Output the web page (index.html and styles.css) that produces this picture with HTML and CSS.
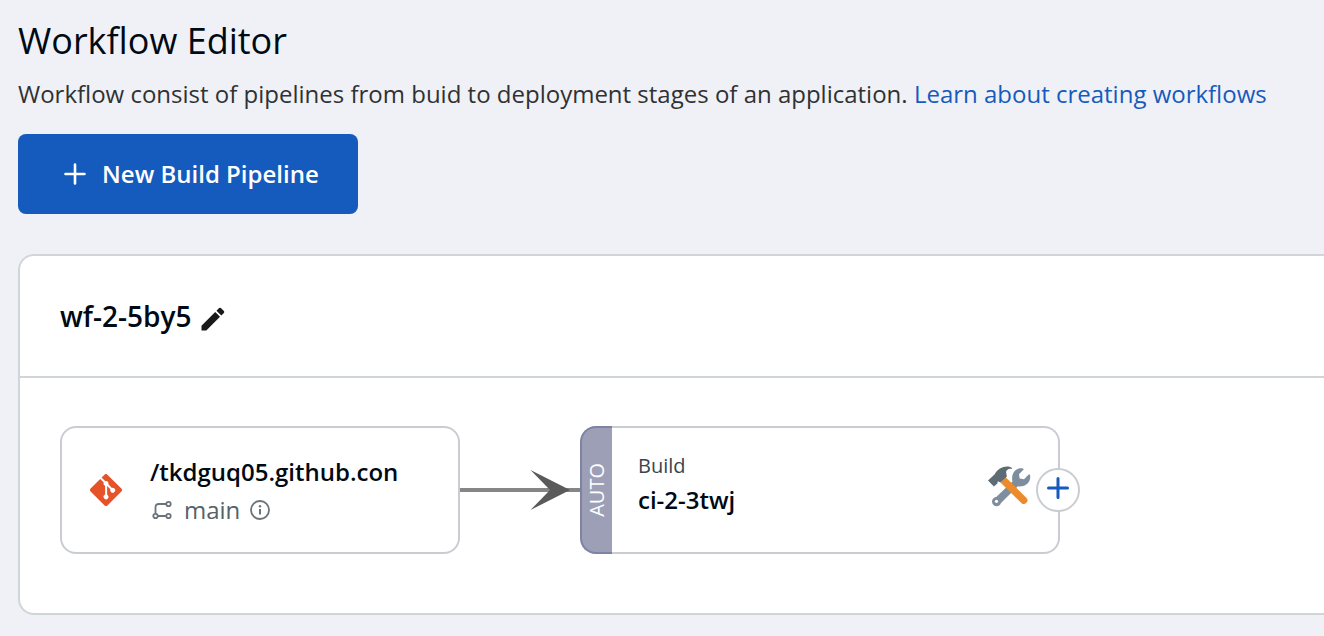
FILE: index.html
```html
<!DOCTYPE html>
<html lang="en">
<head>
<meta charset="utf-8">
<meta name="viewport" content="width=device-width, initial-scale=1">
<title>Workflow Editor</title>
<link rel="stylesheet" href="styles.css">
</head>
<body>
<main class="page">
  <header class="intro">
    <h1 class="title">Workflow Editor</h1>
    <p class="description">Workflow consist of pipelines from buid to deployment stages of an application. <a class="link" href="#docs">Learn about creating workflows</a></p>
    <button class="new-pipeline" type="button">
      <svg width="22" height="22" viewBox="0 0 22 22" aria-hidden="true"><path d="M11 1.500v19M1.500 11h19" stroke="#fff" stroke-width="2.600" stroke-linecap="round"/></svg>
      <span>New Build Pipeline</span>
    </button>
  </header>

  <section class="workflow">
    <div class="workflow-head">
      <h2 class="workflow-name">wf-2-5by5</h2>
      <button class="edit" type="button" aria-label="Edit workflow name">
        <svg width="24" height="24" viewBox="0 0 24 24" aria-hidden="true"><path fill="#1a1a1a" d="M.5 18.700v4.800h4.800L19 9.800 14.200 5zM22.900 5.900a1.300 1.300 0 0 0 0-1.800l-3-3a1.300 1.300 0 0 0-1.800 0L15.500 3.700l4.800 4.800z"/></svg>
      </button>
    </div>
    <div class="workflow-body">
      <article class="node source">
        <svg class="git" width="32" height="32" viewBox="0 0 92 92" aria-hidden="true"><path fill="#e65328" d="M90.156 41.965 50.036 1.848a5.918 5.918 0 0 0-8.372 0l-8.328 8.332 10.566 10.566a7.030 7.030 0 0 1 7.230 1.684 7.034 7.034 0 0 1 1.669 7.277l10.187 10.184a7.028 7.028 0 0 1 7.278 1.672 7.040 7.040 0 0 1 0 9.957 7.050 7.050 0 0 1-9.965 0 7.044 7.044 0 0 1-1.528-7.660l-9.500-9.497V59.360a7.040 7.040 0 0 1 1.860 11.290 7.040 7.040 0 0 1-9.957 0 7.040 7.040 0 0 1 0-9.958 7.060 7.060 0 0 1 2.304-1.539V33.926a7.049 7.049 0 0 1-3.820-9.234L29.242 14.272 1.730 41.777a5.920 5.920 0 0 0 0 8.371L41.852 90.270a5.925 5.925 0 0 0 8.370 0l39.934-39.934a5.925 5.925 0 0 0 0-8.371"/></svg>
        <div class="node-text">
          <div class="node-name">/tkdguq05.github.con</div>
          <div class="branch">
            <svg width="20" height="20" viewBox="0 0 20 20" fill="none" stroke="#6b747c" stroke-width="1.800" aria-hidden="true"><circle cx="3.500" cy="16" r="2.200"/><circle cx="16.500" cy="16" r="2.200"/><circle cx="16.500" cy="4" r="2.200"/><path d="M3.500 13.800V7.500Q3.500 4 7 4h7.300M5.700 16h8.600"/></svg>
            <span class="branch-name">main</span>
            <svg width="20" height="20" viewBox="0 0 20 20" fill="none" aria-hidden="true"><circle cx="10" cy="10" r="9" stroke="#6b747c" stroke-width="1.800"/><path d="M10 9v5.500" stroke="#6b747c" stroke-width="2"/><circle cx="10" cy="6.300" r="1.200" fill="#6b747c"/></svg>
          </div>
        </div>
      </article>

      <svg class="connector" width="120" height="40" viewBox="0 0 120 40" aria-hidden="true"><path d="M0 20h120" stroke="#868686" stroke-width="4"/><path d="M70.500 0 110 20 70.500 40 90 20z" fill="#5a5a5a"/></svg>

      <article class="node build">
        <div class="trigger"><span>AUTO</span></div>
        <div class="build-text">
          <div class="node-kind">Build</div>
          <div class="node-name">ci-2-3twj</div>
        </div>
        <svg class="tools" width="44" height="44" viewBox="0 0 44 44" aria-hidden="true">
          <path fill="#7e8e9e" d="M24.500 15.500C23 9.500 26 3.500 31.500 2.300c2-.4 4 .1 4.300.9L31 8.200l.7 4.300 4.300.8 5-5c1.500 0 1.500 3 .8 5.500-1.700 5.200-7 7.500-12 6.500L13 37C11.500 41.500 4.500 41.500 4 35.800c0-3 2.500-4.500 4.500-5z"/>
          <circle cx="8.500" cy="35.300" r="1.600" fill="#fff"/>
          <path fill="#ed8b2b" d="m12.500 16.500 5-5.500L38.500 32c3 3-1.500 8-4.900 5.200z"/>
          <path fill="#5d6b75" d="M0 14.500 6.500 8.500C9.500 3 15 0 20.500.6c2.500.4 3.800 1.300 3.600 2.300C20 2.500 17.800 4.500 18.200 6.700l.7 3.700-6.500 6.200-2.600-1.400-.4 2.300-3.500 3z"/>
        </svg>
        <button class="add" type="button" aria-label="Add pipeline">
          <svg width="22" height="22" viewBox="0 0 22 22" aria-hidden="true"><path d="M11 1.500v19M1.500 11h19" stroke="#155bbd" stroke-width="3" stroke-linecap="round"/></svg>
        </button>
      </article>
    </div>
  </section>
</main>
</body>
</html>
```
FILE: styles.css
```css
* {
  box-sizing: border-box;
}

body {
  margin: 0;
  background: #f0f1f6;
  color: #000a14;
  font-family: "Open Sans", sans-serif;
  font-size: 24px;
  line-height: 32px;
}

h1, h2, p {
  margin: 0;
}

button {
  padding: 0;
  border: 0;
  font: inherit;
  cursor: pointer;
}

svg {
  display: block;
  flex: none;
}

.page {
  padding: 17px 0 20px 18px;
}

.title {
  font-size: 36px;
  font-weight: 400;
  line-height: 48px;
}

.description {
  margin-top: 13px;
  color: #2f3235;
}

.link {
  color: #155bbd;
  text-decoration: none;
}

.new-pipeline {
  display: flex;
  align-items: center;
  gap: 16px;
  height: 80px;
  margin-top: 24px;
  padding: 0 39px 0 46px;
  border-radius: 8px;
  background: #155bbd;
  color: #fff;
  font-weight: 600;
}

.workflow {
  margin-top: 40px;
  border: 2px solid #d0d5d9;
  border-right: 0;
  border-radius: 16px 0 0 16px;
  background: #fff;
}

.workflow-head {
  display: flex;
  align-items: center;
  gap: 10px;
  padding: 40px;
  border-bottom: 2px solid #d0d5d9;
}

.workflow-name {
  font-size: 28px;
  font-weight: 600;
  line-height: 40px;
}

.edit {
  padding-top: 6px;
  background: none;
}

.workflow-body {
  display: flex;
  align-items: center;
  padding: 48px 40px 59px;
}

.node {
  display: flex;
  align-items: center;
  flex: none;
  height: 128px;
  border: 2px solid #c9cdd2;
  border-radius: 16px;
  background: #fff;
}

.source {
  gap: 28px;
  width: 400px;
  padding-left: 28px;
}

.node-text {
  padding-top: 2px;
}

.node-name {
  font-weight: 600;
}

.branch {
  display: flex;
  align-items: center;
  gap: 10px;
  margin-top: 6px;
  padding-left: 2px;
  color: #596168;
}

.branch-name {
  padding-left: 2px;
}

.build {
  position: relative;
  width: 480px;
  padding-right: 26px;
  border-left: 0;
}

.trigger {
  display: flex;
  align-items: center;
  justify-content: center;
  align-self: stretch;
  width: 32px;
  margin: -2px 0;
  border: 2px solid #7f82a3;
  border-right: 0;
  border-radius: 16px 0 0 16px;
  background: #9d9fb7;
  color: #fff;
  font-size: 20px;
}

.trigger span {
  writing-mode: vertical-rl;
  transform: rotate(180deg);
}

.build-text {
  flex: 1;
  padding: 0 0 14px 26px;
}

.node-kind {
  margin-bottom: 2px;
  color: #3b444c;
  font-size: 20px;
}

.tools {
  margin-bottom: 4px;
}

.add {
  position: absolute;
  top: 40px;
  right: -22px;
  display: flex;
  justify-content: center;
  width: 44px;
  height: 44px;
  padding-top: 7px;
  border: 2px solid #c9cdd2;
  border-radius: 50%;
  background: #fff;
}
```
